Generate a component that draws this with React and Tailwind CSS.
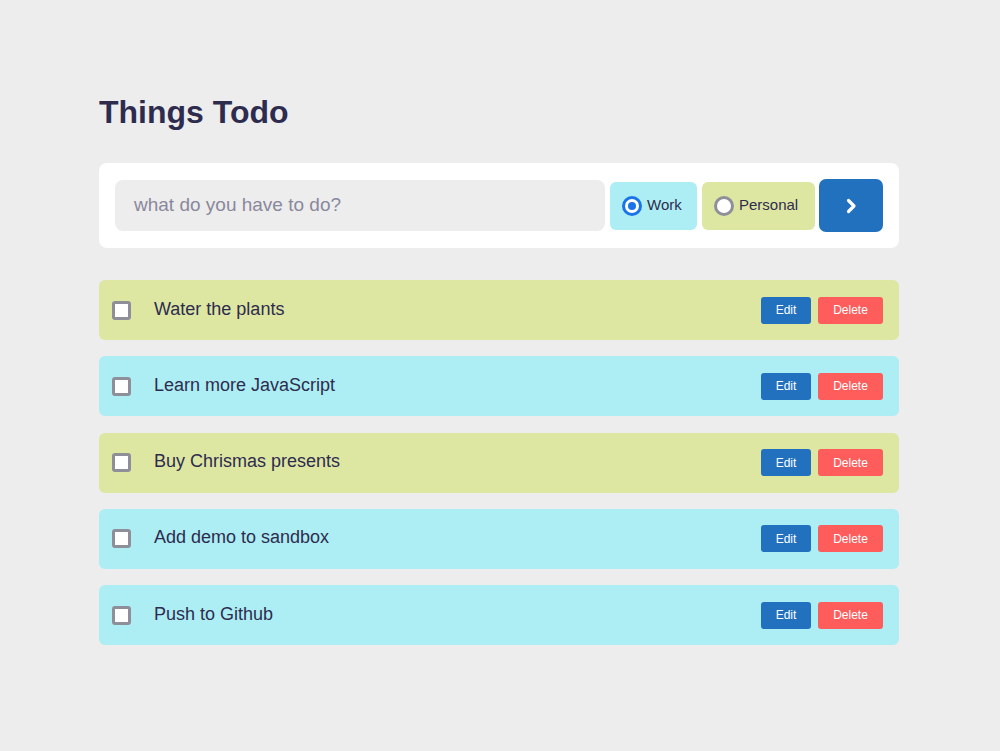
const todos = [
  { text: "Water the plants", kind: "personal" },
  { text: "Learn more JavaScript", kind: "work" },
  { text: "Buy Chrismas presents", kind: "personal" },
  { text: "Add demo to sandbox", kind: "work" },
  { text: "Push to Github", kind: "work" },
];

function Radio({ checked }) {
  return checked ? (
    <span className="w-[20px] h-[20px] rounded-full border-[3px] border-[#1a73e8] bg-white flex items-center justify-center">
      <span className="w-[8px] h-[8px] rounded-full bg-[#1a73e8]" />
    </span>
  ) : (
    <span className="w-[20px] h-[20px] rounded-full border-[3px] border-[#8f8f9a] bg-white" />
  );
}

function TodoRow({ text, kind }) {
  const bg = kind === "work" ? "bg-[#adeef4]" : "bg-[#dee7a2]";
  return (
    <div className={`${bg} h-[60px] rounded-[6px] flex items-center pl-[13px] pr-[16px]`}>
      <span className="w-[19px] h-[19px] border-[3px] border-[#8f8f9a] rounded-[3px] bg-white shrink-0" />
      <span className="ml-[23px] mb-[2px] text-[18px] text-[#2d2c4f] flex-1">{text}</span>
      <button className="h-[27px] w-[50px] rounded-[3px] bg-[#2171bf] text-white text-[12px]">Edit</button>
      <button className="ml-[7px] h-[27px] w-[65px] rounded-[3px] bg-[#ff5c5c] text-white text-[12px]">Delete</button>
    </div>
  );
}

export default function App() {
  return (
    <div className="min-h-[751px] bg-[#ededed] font-['Liberation_Sans',Arial,sans-serif]">
      <div className="w-[800px] ml-[99px] pt-[92px]">
        <h1 className="text-[32px] font-bold text-[#2d2c4f] leading-[40px]">Things Todo</h1>

        {/* Add form */}
        <div className="mt-[31px] bg-white rounded-[8px] h-[85px] pl-[16px] pr-[16px] flex items-center">
          <div className="w-[490px] h-[51px] bg-[#ededed] rounded-[8px] flex items-center px-[19px] text-[19px] text-[#8a889c]">
            what do you have to do?
          </div>
          <label className="ml-[5px] w-[87px] h-[48px] bg-[#adeef4] rounded-[6px] flex items-center pl-[12px] gap-[5px] text-[15px] text-[#2d2c4f]">
            <Radio checked />
            Work
          </label>
          <label className="ml-[5px] w-[113px] h-[48px] bg-[#dee7a2] rounded-[6px] flex items-center pl-[12px] gap-[5px] text-[15px] text-[#2d2c4f]">
            <Radio />
            Personal
          </label>
          <button className="ml-[4px] w-[64px] h-[53px] bg-[#2171bf] rounded-[7px] flex items-center justify-center">
            <svg width="12" height="16" viewBox="0 0 12 16" fill="none">
              <path d="M3.5 2.5 L9 8 L3.5 13.5" stroke="white" strokeWidth="3.2" strokeLinecap="round" strokeLinejoin="round" />
            </svg>
          </button>
        </div>

        {/* Todo list */}
        <div className="mt-[32px] flex flex-col gap-[16.25px]">
          {todos.map((t) => (
            <TodoRow key={t.text} text={t.text} kind={t.kind} />
          ))}
        </div>
      </div>
    </div>
  );
}
